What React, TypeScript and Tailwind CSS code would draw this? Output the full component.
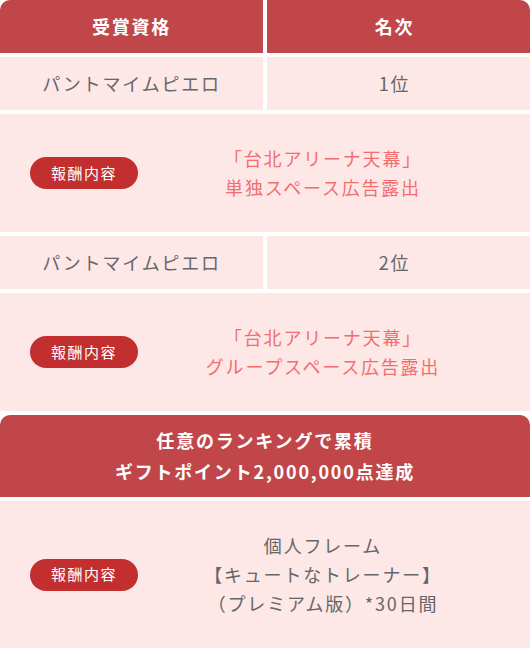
const font = { fontFamily: '"Noto Sans CJK JP", "Noto Sans", sans-serif' };

function Badge() {
  return (
    <span className="flex h-[32px] w-[108px] shrink-0 items-center justify-center rounded-full bg-[#c32f2f] text-[15px] tracking-[0.1em] text-white">
      報酬内容
    </span>
  );
}

function RankRow({ name, rank }: { name: string; rank: string }) {
  return (
    <div className="grid grid-cols-2 gap-1">
      <div className="flex h-[53px] items-center justify-center bg-[#fde7e7] text-[18px] tracking-[0.1em] text-[#666666]">
        {name}
      </div>
      <div className="flex h-[53px] items-center justify-center bg-[#fde7e7] pr-[8px] text-[18px] tracking-[0.1em] text-[#666666]">
        {rank}
      </div>
    </div>
  );
}

function RewardRow({ lines, tone, height }: { lines: string[]; tone: "coral" | "gray"; height: string }) {
  return (
    <div className={`flex items-center bg-[#fde7e7] pl-[30px] pr-[22px] ${height}`}>
      <Badge />
      <div
        className={`flex-1 text-center text-[18px] leading-[28.8px] tracking-[0.1em] ${
          tone === "coral" ? "text-[#f26e6e]" : "text-[#666666]"
        }`}
      >
        {lines.map((l) => (
          <div key={l}>{l}</div>
        ))}
      </div>
    </div>
  );
}

export default function App() {
  return (
    <div className="flex w-[530px] flex-col gap-1 bg-white" style={font}>
      {/* table header */}
      <div className="grid grid-cols-2 gap-1">
        <div className="flex h-[53px] items-center justify-center rounded-tl-[10px] bg-[#c1464a] text-[18px] font-bold tracking-[0.1em] text-white">
          受賞資格
        </div>
        <div className="flex h-[53px] items-center justify-center rounded-tr-[10px] bg-[#c1464a] pr-[8px] text-[18px] font-bold tracking-[0.1em] text-white">
          名次
        </div>
      </div>

      <RankRow name="パントマイムピエロ" rank="1位" />
      <RewardRow lines={["「台北アリーナ天幕」", "単独スペース広告露出"]} tone="coral" height="h-[118px]" />

      <RankRow name="パントマイムピエロ" rank="2位" />
      <RewardRow lines={["「台北アリーナ天幕」", "グループスペース広告露出"]} tone="coral" height="h-[118px]" />

      {/* cumulative gift points */}
      <div className="flex h-[82px] flex-col items-center justify-center rounded-t-[10px] bg-[#c1464a] text-[18px] font-bold leading-[30.6px] tracking-[0.1em] text-white">
        <div>任意のランキングで累積</div>
        <div>ギフトポイント2,000,000点達成</div>
      </div>
      <RewardRow
        lines={["個人フレーム", "【キュートなトレーナー】", "（プレミアム版）*30日間"]}
        tone="gray"
        height="h-[147px]"
      />
    </div>
  );
}
